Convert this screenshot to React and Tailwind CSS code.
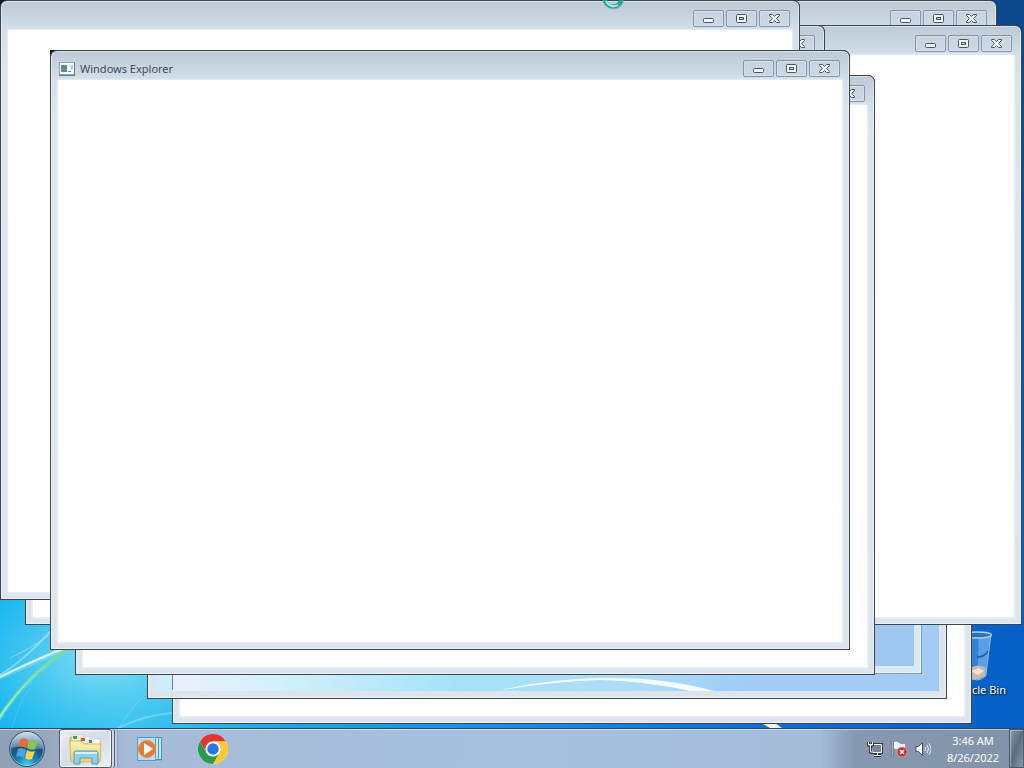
import clsx from 'clsx';

// Back to front, the last one has the focus
const windows = [
  { id: 'f', place: 'left-[172px] top-[124px]' },
  { id: 'e', place: 'left-[147px] top-[99px]', kind: 'glass' },
  { id: 'c', place: 'left-[122px] top-[74px]', kind: 'ghost' },
  { id: 'g', place: 'left-[197px] top-0' },
  { id: 'h', place: 'left-[222px] top-[25px]' },
  { id: 'b', place: 'left-[25px] top-[25px]' },
  { id: 'a', place: 'left-0 top-0' },
  { id: 'd', place: 'left-[75px] top-[75px]' },
  { id: 'main', place: 'left-[50px] top-[50px]', title: 'Windows Explorer' }
];

function Wallpaper() {
  return (
    <svg className="absolute inset-0 h-full w-full" viewBox="0 0 1024 728" preserveAspectRatio="none" aria-hidden="true">
      <defs>
        <linearGradient id="sky" x1="0" x2="1" y1="0" y2="0">
          <stop offset="0" stopColor="#12b4f0" />
          <stop offset="0.12" stopColor="#2fc0f0" />
          <stop offset="0.3" stopColor="#16a6e8" />
          <stop offset="0.55" stopColor="#1688e4" />
          <stop offset="0.75" stopColor="#0b6edb" />
          <stop offset="1" stopColor="#0560c6" />
        </linearGradient>
        <linearGradient id="dusk" x1="0" x2="0" y1="0" y2="1">
          <stop offset="0" stopColor="#0e3f76" stopOpacity="0.75" />
          <stop offset="0.8" stopColor="#0e3f76" stopOpacity="0" />
        </linearGradient>
        <radialGradient id="glow">
          <stop offset="0" stopColor="#8be2f3" stopOpacity="0.9" />
          <stop offset="1" stopColor="#4cc8f0" stopOpacity="0" />
        </radialGradient>
        <linearGradient id="stem" x1="0" x2="1" y1="1" y2="0">
          <stop offset="0" stopColor="#a8f3b0" />
          <stop offset="1" stopColor="#6fdc7a" />
        </linearGradient>
      </defs>
      <rect width="1024" height="728" fill="url(#sky)" />
      <rect width="1024" height="728" fill="url(#dusk)" />
      <ellipse cx="105" cy="660" rx="170" ry="100" fill="url(#glow)" />
      <g fill="none" strokeLinecap="round">
        <path d="M-2 678Q30 664 72 645" stroke="#fff" strokeWidth="5" opacity="0.2" />
        <path d="M-2 678Q30 662 72 645" stroke="#e9fcff" strokeWidth="2" opacity="0.85" />
        <path d="M-2 676Q20 664 50 632" stroke="#bdf0fb" strokeWidth="2" opacity="0.5" />
        <path d="M10 658Q28 650 48 636" stroke="#bdf0fb" strokeWidth="1" opacity="0.5" />
        <path d="M-2 720Q26 676 68 649" stroke="#7fe0c0" strokeWidth="5" opacity="0.4" />
        <path d="M-2 720Q26 676 68 649" stroke="url(#stem)" strokeWidth="2" />
        <path d="M12 728Q20 700 30 688" stroke="#9be8fb" strokeWidth="1" opacity="0.2" />
        <path d="M118 728Q145 715 172 713" stroke="#b5ecfa" strokeWidth="2" opacity="0.4" />
        <path d="M120 726Q132 706 150 690" stroke="#b5ecfa" strokeWidth="1" opacity="0.3" />
      </g>
      <path d="M761 723h14l7 5h-12z" fill="#f4fcff" />
    </svg>
  );
}

function RecycleBin() {
  return (
    <a
      href="#recycle-bin"
      className="absolute left-[940px] top-[630px] flex w-[74px] flex-col items-center text-[11px] text-white [text-shadow:1px_1px_2px_#000]"
    >
      <svg className="h-[52px] w-8" viewBox="0 0 40 52" preserveAspectRatio="none" aria-hidden="true">
        <path d="M2 5l7 41q11 7 22 0l7-41z" fill="#3f8ddd" fillOpacity="0.75" />
        <path d="M22 8h14l-6 37q-5 3-9 2z" fill="#9bcaf3" fillOpacity="0.4" />
        <path d="M11 38q11-5 20 0l-1 8q-9 5-18 3z" fill="#c9b9a8" />
        <path d="M13 41l9-3 7 3-8 4z" fill="#eee5da" />
        <path d="M20 27q10 0 14-6" fill="none" stroke="#225a9c" strokeWidth="1.5" />
        <path d="M37 6l-6 40" stroke="#a5cff2" />
        <ellipse cx="20" cy="5" rx="18" ry="3" fill="#2f71b8" stroke="#b3cfe2" strokeWidth="1.5" />
        <path d="M9 46q11 8 22 0" fill="none" stroke="#a5c6e2" />
      </svg>
      <span className="leading-4">Recycle Bin</span>
    </a>
  );
}

function CaptionButton({ label, children }) {
  return (
    <button
      type="button"
      aria-label={label}
      className="flex h-[17px] w-[31px] items-center justify-center rounded-[2px] border border-[#8295ad] bg-[#c9d5e2]/60 shadow-[inset_0_0_0_1px_rgba(255,255,255,0.25)]"
    >
      <svg className="h-[11px] w-[11px]" viewBox="0 0 11 11" fill="none" stroke="#4b5567" aria-hidden="true">
        {children}
      </svg>
    </button>
  );
}

function Window({ place, title, kind }) {
  return (
    <section
      aria-label={title || 'Window'}
      className={clsx('absolute h-[600px] w-[800px] rounded-tr-[7px] bg-[#11161d]', place)}
    >
      <div
        className={clsx(
          'flex h-full flex-col rounded-t-[7px] border px-[7px] pb-[7px] shadow-[inset_0_0_0_1px_rgba(255,255,255,0.45)]',
          kind === 'ghost'
            ? 'border-[#7d9cc0] bg-[#dbe9f6]'
            : 'border-[#3d4553] bg-[linear-gradient(to_bottom,#bdcad5_0px,#d2deea_29px,#dbe4ed_60px,#dce4ec_100%)]'
        )}
      >
        <header className="flex h-[29px] shrink-0 items-start justify-between pr-0.5 pt-[9px]">
          <div className="flex h-[17px] items-center gap-[5px] pl-px">
            {title && (
              <>
                <svg className="h-[14px] w-4" viewBox="0 0 16 14" aria-hidden="true">
                  <rect x="0.5" y="0.5" width="15" height="12" fill="#f6fafb" stroke="#91a4b4" />
                  <path d="M0 13.5h16M15.5 1v12" stroke="#617a8c" />
                  <rect x="2" y="3" width="6" height="7" fill="#5f8c88" />
                  <path d="M9 9.5h3M13 3v4" stroke="#75919f" />
                </svg>
                <h1 className="text-[11px] leading-4 text-[#414a57]">{title}</h1>
              </>
            )}
          </div>
          <div className="flex gap-0.5">
            <CaptionButton label="Minimize">
              <rect x="0.5" y="5.5" width="10" height="4" rx="1" fill="#f4f7fa" />
            </CaptionButton>
            <CaptionButton label="Maximize">
              <rect x="0.5" y="1.5" width="10" height="8" rx="1" fill="#f4f7fa" />
              <rect x="3.5" y="4.5" width="4" height="2" fill="#c9d5e2" />
            </CaptionButton>
            <CaptionButton label="Close">
              <path d="M0.5 1.5h3l2 2 2-2h3v1l-3 3 3 3v1h-3l-2-2-2 2h-3v-1l3-3-3-3z" fill="#f8fafc" />
            </CaptionButton>
          </div>
        </header>
        <div
          className={clsx(
            'flex flex-1 items-end',
            kind === 'glass' && 'bg-[linear-gradient(to_right,#cdeef8_0px,#cdeef8_17px,#e9effa_18px,#d2f1fb_120px,#a5e2f9_300px,#aedcf8_480px,#9fcbf5_600px,#a3cbf4_100%)]',
            kind === 'ghost' && 'bg-[#9fc6ee]',
            !kind && 'bg-white shadow-[0_0_2px_1px_rgba(255,255,255,0.5)]'
          )}
        >
          {kind === 'glass' && (
            <svg className="h-4 w-full" viewBox="0 0 784 16" preserveAspectRatio="none" aria-hidden="true">
              <path d="M17.5 0v15" stroke="#747d94" />
              <path d="M343 16Q385 5 445 3Q510 2 559 16H535Q490 6 445 5Q390 7 343 16z" fill="#f4fcff" />
            </svg>
          )}
        </div>
      </div>
    </section>
  );
}

function BusyCursor() {
  return (
    <svg className="absolute -top-[14px] left-[601px] h-6 w-6" viewBox="0 0 24 24" fill="none" aria-hidden="true">
      <circle cx="13" cy="13" r="8.5" stroke="#68818c" strokeWidth="4" opacity="0.4" />
      <circle cx="12" cy="12" r="8.5" stroke="#1fa595" strokeWidth="4" />
      <path d="M5 15a8.5 8.5 0 0 0 12 4" stroke="#a5efdf" strokeWidth="2" />
    </svg>
  );
}

function StartOrb() {
  return (
    <svg className="h-[38px] w-[38px]" viewBox="0 0 38 38" aria-hidden="true">
      <defs>
        <radialGradient id="orb" cx="0.5" cy="0.95" r="0.9">
          <stop offset="0" stopColor="#42d4ee" />
          <stop offset="0.3" stopColor="#1a86b8" />
          <stop offset="0.6" stopColor="#174f80" />
          <stop offset="1" stopColor="#6d93ae" />
        </radialGradient>
        <linearGradient id="gloss" x1="0" x2="0" y1="0" y2="1">
          <stop offset="0" stopColor="#e4eef4" stopOpacity="0.85" />
          <stop offset="1" stopColor="#a9c4d6" stopOpacity="0.3" />
        </linearGradient>
      </defs>
      <circle cx="19" cy="19" r="17.5" fill="url(#orb)" stroke="#38536c" />
      <path d="M3 18a16 16 0 0 1 32 0Q26 21 19 18T3 18z" fill="url(#gloss)" />
      <circle cx="19" cy="19" r="16.5" fill="none" stroke="#c6dce8" strokeOpacity="0.5" />
      <path d="M13 9q4-2 7 1l-2 8q-4-3-8-1z" fill="#ee6b2f" />
      <path d="M21 10q4 3 9 1l-3 8q-4 2-8-1z" fill="#8dc549" />
      <path d="M10 19q4-2 8 1l-2 8q-4-3-8-1z" fill="#49a4e4" />
      <path d="M19 20q4 3 8 1l-3 8q-4 2-7-1z" fill="#fbd54a" />
    </svg>
  );
}

function ExplorerIcon() {
  return (
    <svg className="h-8 w-9" viewBox="0 0 36 32" aria-hidden="true">
      <defs>
        <linearGradient id="folder" x1="0" x2="0" y1="0" y2="1">
          <stop offset="0" stopColor="#fdf3b4" />
          <stop offset="1" stopColor="#ecd373" />
        </linearGradient>
      </defs>
      <path d="M2 6q0-2 2-2h9l2 2h5l2 2h10v20H3z" fill="#eed67e" stroke="#c6a950" />
      <rect x="4" y="2" width="12" height="6" fill="#fbfbf4" stroke="#c8c09a" strokeWidth="0.5" />
      <rect x="5" y="3" width="4" height="3" fill="#35ac3b" />
      <rect x="12" y="4" width="12" height="6" fill="#fbfbf4" stroke="#c8c09a" strokeWidth="0.5" />
      <rect x="13" y="5" width="4" height="3" fill="#d2552e" />
      <rect x="20" y="6" width="12" height="6" fill="#fbfbf4" stroke="#c8c09a" strokeWidth="0.5" />
      <rect x="21" y="7" width="3" height="3" fill="#3b83c9" />
      <path d="M2 8h11l3 3h17l-1 18H3z" fill="url(#folder)" stroke="#d7b959" />
      <path d="M6 31V20q0-2 2-2h20q2 0 2 2v11h-6v-6H12v6z" fill="#8fcdeb" stroke="#4e9dc9" />
      <path d="M7 20h22" stroke="#d8f3fc" strokeWidth="2" />
    </svg>
  );
}

function MediaIcon() {
  return (
    <svg className="h-7 w-7" viewBox="0 0 28 28" aria-hidden="true">
      <path d="M9 3h16v21h3l-3 2H9z" fill="#73a6c4" opacity="0.5" />
      <rect x="8.5" y="2.5" width="17" height="22" fill="#c4e6f4" stroke="#4c96bd" />
      <rect x="5.5" y="2.5" width="17" height="22" fill="#c4e6f4" stroke="#4c96bd" />
      <rect x="1.5" y="2.5" width="18" height="23" fill="#b9ddf1" stroke="#5c9cc0" />
      <circle cx="11" cy="14" r="8.5" fill="#ec7b2c" stroke="#d5905e" />
      <path d="M8 8l9 6-9 6z" fill="#fff" />
    </svg>
  );
}

function ChromeIcon() {
  return (
    <svg className="h-[30px] w-[30px]" viewBox="0 0 48 48" aria-hidden="true">
      <circle cx="24" cy="24" r="24" fill="#fff" />
      <path d="M3.2 12a24 24 0 0 1 41.6 0H24a12 12 0 0 0-10.4 18z" fill="#dd3a2d" />
      <path d="M44.8 12A24 24 0 0 1 24 48l10.4-18A12 12 0 0 0 24 12z" fill="#fcc934" />
      <path d="M24 48A24 24 0 0 1 3.2 12l10.4 18a12 12 0 0 0 20.8 0z" fill="#2a9a48" />
      <circle cx="24" cy="24" r="11.5" fill="#fff" />
      <circle cx="24" cy="24" r="9.3" fill="#2f73e8" />
    </svg>
  );
}

function TrayIcons() {
  return (
    <div className="flex items-center gap-2">
      <button type="button" aria-label="Network">
        <svg className="h-4 w-4" viewBox="0 0 16 16" fill="none" aria-hidden="true">
          <path d="M7 3.5h7.5v8H5.5V9M7 14.5h7M10.5 12v2" stroke="#2e3b4a" strokeWidth="3" />
          <rect x="5" y="4" width="9" height="7" fill="#76889e" />
          <path d="M7 3.5h7.5v8H5.5V9M7 14.5h7M10.5 12v2" stroke="#fff" />
          <path d="M1.5 1v3h4V1M3.5 4v7h2" stroke="#2e3b4a" strokeWidth="3" />
          <path d="M1.5 1v3h4V1M2 3.5h3M3.5 4v7h2" stroke="#fff" />
        </svg>
      </button>
      <button type="button" aria-label="Action Center">
        <svg className="h-4 w-4" viewBox="0 0 16 16" aria-hidden="true">
          <path d="M1 0h1v16H1z" fill="#fff" stroke="#3c4858" strokeWidth="0.5" />
          <path d="M3 1q3-1 5 1 3 2 6 1v7q-3 1-6-1-2-2-5-1z" fill="#f3f6f8" />
          <circle cx="11" cy="11" r="5" fill="#d2282c" stroke="#efb0ae" strokeWidth="0.7" />
          <path d="M9 9l4 4m0-4l-4 4" stroke="#fff" strokeWidth="1.6" />
        </svg>
      </button>
      <button type="button" aria-label="Volume">
        <svg className="h-4 w-4" viewBox="0 0 16 16" fill="none" aria-hidden="true">
          <path d="M1 5.5h2.500l4-4v13l-4-4H1z" fill="#fff" stroke="#465366" />
          <path d="M10 6q1.500 2 0 4M12 4q3 4 0 8M14 2.500q4 5.500 0 11" stroke="#f1f5f9" />
        </svg>
      </button>
    </div>
  );
}

function Taskbar() {
  return (
    <footer className="flex h-10 shrink-0 items-stretch border-t border-[#2c4a68] bg-[linear-gradient(to_right,#8f9fb5_0px,#97a8bf_50px,#a6bbd8_130px,#a6c0dd_50%,#a5bcd9_calc(100%-204px),#8799b0_calc(100%-170px),#8192a8_100%)] shadow-[inset_0_1px_0_rgba(255,255,255,0.5)]">
      <button type="button" aria-label="Start" className="flex w-[59px] items-center pl-2">
        <StartOrb />
      </button>
      <div className="flex">
        <button
          type="button"
          aria-label="Windows Explorer"
          className="flex w-[53px] items-center justify-center rounded-[3px] border border-[#4a5a70] bg-linear-to-br from-[#e8edf4] via-[#d3dcea] to-[#edf0f6] shadow-[inset_0_0_0_1px_rgba(255,255,255,0.8)]"
        >
          <ExplorerIcon />
        </button>
        <div className="w-[3px] rounded-r-[3px] border-r border-[#4a5a70] bg-[#d0dae8]" />
        <div className="w-[3px] rounded-r-[3px] border-r border-[#8b9cb4] bg-[#c3d0e2]" />
      </div>
      <button type="button" aria-label="Windows Media Player" className="flex w-16 items-center justify-center">
        <MediaIcon />
      </button>
      <button type="button" aria-label="Google Chrome" className="flex w-[62px] items-center justify-center">
        <ChromeIcon />
      </button>
      <div className="ml-auto flex items-stretch">
        <TrayIcons />
        <button type="button" className="flex w-[78px] flex-col items-center justify-center pl-1.5 text-center text-[11px] leading-[17px] text-white">
          <span>3:46 AM</span>
          <span>8/26/2022</span>
        </button>
        <button
          type="button"
          aria-label="Show desktop"
          className="w-[15px] border border-[#4d5b6c] bg-linear-to-br from-[#8b9aac] via-[#5d6d80] to-[#8a99aa] shadow-[inset_1px_1px_0_rgba(255,255,255,0.35)]"
        />
      </div>
    </footer>
  );
}

function App() {
  return (
    <div className="flex h-screen flex-col overflow-hidden font-['Noto_Sans','Open_Sans',sans-serif]">
      <main className="relative flex-1 overflow-hidden">
        <Wallpaper />
        <RecycleBin />
        {windows.map((win) => (
          <Window key={win.id} {...win} />
        ))}
        <BusyCursor />
      </main>
      <Taskbar />
    </div>
  );
}

export default App;
